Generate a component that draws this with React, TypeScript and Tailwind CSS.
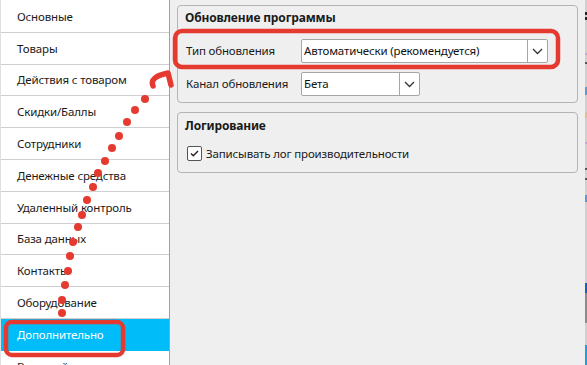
import React from 'react';

const navItems = [
  'Основные',
  'Товары',
  'Действия с товаром',
  'Скидки/Баллы',
  'Сотрудники',
  'Денежные средства',
  'Удаленный контроль',
  'База данных',
  'Контакты',
  'Оборудование',
  'Дополнительно',
  'Внешний вид',
];

const dots: [number, number][] = [
  [145, 99], [135, 110], [127, 122], [119, 136], [112, 148], [105, 161],
  [98, 173], [93, 187], [87, 200], [82, 215], [78, 227], [73, 242],
  [70, 256], [68, 271], [65, 285], [62, 300], [62, 313],
];

// right screen edge: bits of whatever sits beside the window
const edge: [number, string][] = [
  [12, '#d0d0d0'], [3, '#222'], [2, '#d0d0d0'], [3, '#222'], [33, '#d0d0d0'], [2, '#c9a0e0'],
  [7, '#d0d0d0'], [2, '#555'], [23, '#d0d0d0'], [8, '#5a9bd5'], [17, '#d0d0d0'], [6, '#e0c090'],
  [24, '#d0d0d0'], [2, '#c9a0e0'], [24, '#d0d0d0'], [2, '#555'], [8, '#d0d0d0'], [2, '#555'],
  [15, '#d0d0d0'], [7, '#5a9bd5'], [81, '#d0d0d0'], [10, '#0a64c8'], [30, '#8a8a8a'], [22, '#d0d0d0'],
  [20, '#1aa0e0'],
];

const Chevron = () => (
  <svg width="11" height="7" viewBox="0 0 11 7" fill="none">
    <path d="M1 1 L5.5 5.5 L10 1" stroke="#333" strokeWidth="1.3" />
  </svg>
);

const Combo: React.FC<{ value: string; width: string }> = ({ value, width }) => (
  <div className={`flex h-[24px] items-stretch rounded-[2px] border border-[#a6a6a6] bg-white ${width}`}>
    <span className="flex flex-1 items-center pl-[2px] text-[#111]">{value}</span>
    <span className="flex w-[20px] items-center justify-center border-l border-[#a6a6a6]">
      <Chevron />
    </span>
  </div>
);

const App: React.FC = () => {
  return (
    <div className="relative flex h-[365px] w-[587px] overflow-hidden bg-[#efefef] font-['Noto_Sans',sans-serif] text-[11.5px] tracking-[-0.15px] text-[#1a1a1a]">
      <div className="flex w-[170px] flex-col border-r border-[#a0a0a0] border-l border-l-[#e0e0e0] bg-white pt-[1px]">
        {navItems.map((item, i) => (
          <div
            key={item}
            className={
              i === 10
                ? 'flex h-[31.8px] shrink-0 items-center bg-[#00bcf8] pl-[16px] text-white'
                : 'flex h-[31.8px] shrink-0 items-center border-b border-[#cfcfcf] pl-[16px]'
            }
          >
            {item}
          </div>
        ))}
      </div>

      <div className="flex flex-1 flex-col gap-[9px] px-[7px] pt-[5px]">
        <div className="flex h-[98px] flex-col rounded-[4px] border border-[#b4b4b4] px-[7px] pt-[3px]">
          <div className="h-[22px] text-[12px] font-bold">Обновление программы</div>
          <div className="mt-[8px] flex items-center">
            <span className="w-[116px] pl-[1px]">Тип обновления</span>
            <Combo value="Автоматически (рекомендуется)" width="w-[247px]" />
          </div>
          <div className="mt-[9px] flex items-center">
            <span className="w-[116px] pl-[1px]">Канал обновления</span>
            <Combo value="Бета" width="w-[119px]" />
          </div>
        </div>

        <div className="flex h-[61px] flex-col rounded-[4px] border border-[#b4b4b4] px-[7px] pt-[4px]">
          <div className="h-[22px] text-[12px] font-bold">Логирование</div>
          <div className="mt-[6px] flex items-center gap-[4px] pl-[2px]">
            <span className="flex h-[15px] w-[15px] items-center justify-center rounded-[2px] border border-[#555] bg-white">
              <svg width="9" height="7" viewBox="0 0 9 7" fill="none">
                <path d="M1 3.5 L3.3 5.8 L8 1" stroke="#222" strokeWidth="1.4" />
              </svg>
            </span>
            <span>Записывать лог производительности</span>
          </div>
        </div>
      </div>

      <div className="flex w-[2px] flex-col">
        {edge.map(([h, c], i) => (
          <div key={i} className="shrink-0" style={{ height: h, background: c }} />
        ))}
      </div>

      <svg className="pointer-events-none absolute inset-0" width="587" height="365" viewBox="0 0 587 365">
        <rect x="175" y="31" width="383" height="36" rx="7" fill="none" stroke="#e53a30" strokeWidth="4.5" />
        <rect x="6" y="322" width="117" height="33" rx="6" fill="none" stroke="#e53a30" strokeWidth="4.5" />
        {dots.map(([x, y], i) => (
          <circle key={i} cx={x} cy={y} r="4" fill="#e53a30" />
        ))}
        <path
          d="M153 86 Q149 77 168 73 L171 85"
          fill="none"
          stroke="#e53a30"
          strokeWidth="5.5"
          strokeLinecap="round"
          strokeLinejoin="round"
        />
      </svg>
    </div>
  );
};

export default App;
